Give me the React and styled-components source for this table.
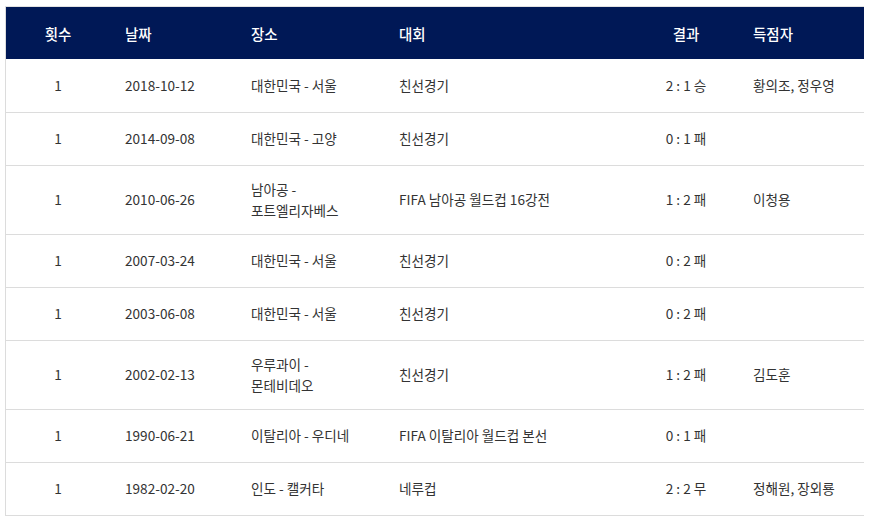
import styled, {createGlobalStyle} from "styled-components";

const GlobalStyle = createGlobalStyle`
  body {
    margin: 0;
    background: #fff;
    font-family: "Noto Sans CJK KR", "Noto Sans", sans-serif;
  }
`;

const Wrapper = styled.div`
  margin: 6px 0 0 5px;
  width: 858px;
  border-top: 1px solid #e2e2e2;
  border-left: 1px solid #dcdcdc;
`;

const Table = styled.table`
  width: 100%;
  border-collapse: collapse;
  table-layout: fixed;
  word-break: keep-all;
`;

const HeadCell = styled.th`
  background-color: #001856;
  color: #fff;
  font-size: 14.5px;
  font-weight: 500;
  height: 52px;
  padding: 0 0 0 15px;
  line-height: 21px;
  text-align: left;
  ${props => props.center && `
    text-align: center;
    padding: 0;
  `}
`;

const Row = styled.tr`
  border-bottom: 1px solid #dcdcdc;
`;

const Cell = styled.td`
  height: 53px;
  box-sizing: border-box;
  padding: 13px 15px 13px 15px;
  font-size: 13.6px;
  line-height: 21px;
  color: #333;
  vertical-align: middle;
  ${props => props.center && `
    text-align: center;
    padding: 13px 0;
  `}
`;

const columns = [104, 126, 148, 250, 104, 126];

const matches = [
  {no: 1, date: "2018-10-12", place: "대한민국 - 서울", cup: "친선경기", result: "2 : 1 승", scorers: "황의조, 정우영"},
  {no: 1, date: "2014-09-08", place: "대한민국 - 고양", cup: "친선경기", result: "0 : 1 패", scorers: ""},
  {no: 1, date: "2010-06-26", place: "남아공 - 포트엘리자베스", cup: "FIFA 남아공 월드컵 16강전", result: "1 : 2 패", scorers: "이청용"},
  {no: 1, date: "2007-03-24", place: "대한민국 - 서울", cup: "친선경기", result: "0 : 2 패", scorers: ""},
  {no: 1, date: "2003-06-08", place: "대한민국 - 서울", cup: "친선경기", result: "0 : 2 패", scorers: ""},
  {no: 1, date: "2002-02-13", place: "우루과이 - 몬테비데오", cup: "친선경기", result: "1 : 2 패", scorers: "김도훈"},
  {no: 1, date: "1990-06-21", place: "이탈리아 - 우디네", cup: "FIFA 이탈리아 월드컵 본선", result: "0 : 1 패", scorers: ""},
  {no: 1, date: "1982-02-20", place: "인도 - 캘커타", cup: "네루컵", result: "2 : 2 무", scorers: "정해원, 장외룡"},
];

export default function App() {
  return (
    <>
      <GlobalStyle />
      <Wrapper>
        <Table>
          <colgroup>
            {columns.map((w, i) => <col key={i} style={{width: w}} />)}
          </colgroup>
          <thead>
            <tr>
              <HeadCell center>횟수</HeadCell>
              <HeadCell>날짜</HeadCell>
              <HeadCell>장소</HeadCell>
              <HeadCell>대회</HeadCell>
              <HeadCell center>결과</HeadCell>
              <HeadCell>득점자</HeadCell>
            </tr>
          </thead>
          <tbody>
            {matches.map((m, i) => (
              <Row key={i}>
                <Cell center>{m.no}</Cell>
                <Cell>{m.date}</Cell>
                <Cell>{m.place}</Cell>
                <Cell>{m.cup}</Cell>
                <Cell center>{m.result}</Cell>
                <Cell>{m.scorers}</Cell>
              </Row>
            ))}
          </tbody>
        </Table>
      </Wrapper>
    </>
  );
}
